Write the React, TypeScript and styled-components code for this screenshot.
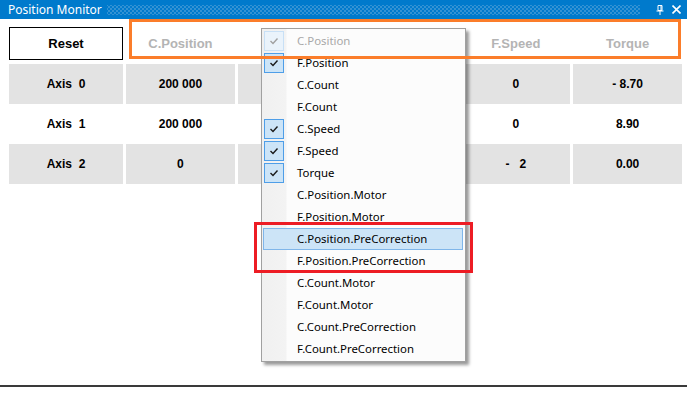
import React from 'react';
import styled, { createGlobalStyle, css } from 'styled-components';

const GlobalStyle = createGlobalStyle`
  html, body { margin: 0; padding: 0; background: #fff; overflow: hidden; }
  * { box-sizing: border-box; }
`;

const Window = styled.div`
  position: relative;
  width: 687px;
  height: 394px;
  display: flex;
  flex-direction: column;
  background: #fff;
  font-family: "Liberation Sans", Arial, sans-serif;
`;

const TitleBar = styled.div`
  height: 19px;
  background: #007acc;
  display: flex;
  align-items: center;
  padding: 0 6px 0 8px;
`;

const Title = styled.span`
  color: #fff;
  font-family: "Noto Sans", "Open Sans", sans-serif;
  font-size: 12px;
  line-height: 19px;
`;

const Grip = styled.div`
  flex: 1;
  height: 10px;
  margin: 0 8px 0 5px;
  background-image:
    radial-gradient(circle, #4f9fd8 0.6px, transparent 0.9px),
    radial-gradient(circle, #4f9fd8 0.6px, transparent 0.9px);
  background-size: 4px 4px, 4px 4px;
  background-position: 0 0, 2px 2px;
`;

const TitleIcon = styled.svg`
  display: block;
  flex: none;
  margin-left: 8px;
`;

const Content = styled.div`
  flex: 1;
  padding: 8px 5px 0 9px;
  display: flex;
  flex-direction: column;
  gap: 4px;
`;

const Row = styled.div<{ $height: number }>`
  display: grid;
  grid-template-columns: 114px repeat(5, 1fr);
  column-gap: 3px;
  height: ${(p) => p.$height}px;
`;

const Rows = styled.div`
  display: flex;
  flex-direction: column;
`;

const ResetButton = styled.button`
  border: 1px solid #000;
  background: #fff;
  font-family: "Liberation Sans", Arial, sans-serif;
  font-weight: bold;
  font-size: 13px;
  color: #000;
  padding: 0;
  margin: 0;
`;

const HeaderLabel = styled.div`
  display: flex;
  align-items: center;
  justify-content: center;
  font-weight: bold;
  font-size: 13px;
  color: #b4b4b4;
`;

const Cell = styled.div<{ $shaded: boolean }>`
  display: flex;
  align-items: center;
  justify-content: center;
  font-weight: bold;
  font-size: 12px;
  color: #000;
  white-space: pre;
  background: ${(p) => (p.$shaded ? '#e3e3e3' : '#fff')};
`;

const BottomLine = styled.div`
  height: 2px;
  background: #3a3a3a;
  margin-bottom: 7px;
`;

const Menu = styled.div`
  position: absolute;
  left: 261px;
  top: 28px;
  width: 205px;
  border: 1px solid #a0a0a0;
  padding: 1px 2px 1px 1px;
  background: linear-gradient(to right, #f0f0f0 0, #f3f3f3 24px, #fcfcfc 25px);
  box-shadow: 3px 3px 3px rgba(0, 0, 0, 0.4);
  font-family: "Noto Sans", "Open Sans", sans-serif;
  font-size: 11.4px;
`;

const MenuItem = styled.div<{ $disabled?: boolean; $active?: boolean }>`
  height: 22px;
  display: flex;
  align-items: center;
  border: 1px solid transparent;
  color: ${(p) => (p.$disabled ? '#a8a8a8' : '#000')};
  ${(p) =>
    p.$active &&
    css`
      background: #cce4f7;
      border-color: #7fb6ea;
    `}
`;

const CheckBox = styled.div<{ $checked: boolean; $disabled?: boolean }>`
  width: 20px;
  height: 20px;
  flex: none;
  display: flex;
  align-items: center;
  justify-content: center;
  border: 1px solid transparent;
  ${(p) =>
    p.$checked &&
    css`
      background: ${p.$disabled ? '#eaf3fb' : '#cce4f7'};
      border-color: ${p.$disabled ? '#c8e0f6' : '#4e9ee8'};
    `}
`;

const ItemLabel = styled.span`
  margin-left: 13px;
  line-height: 20px;
`;

const Annotation = styled.div<{ $color: string }>`
  position: absolute;
  border: 3px solid ${(p) => p.$color};
  pointer-events: none;
`;

const columns = ['C.Position', 'F.Position', 'C.Speed', 'F.Speed', 'Torque'];

// values of F.Position and C.Speed lie under the open menu and are not visible
const rows = [
  { axis: 'Axis  0', values: ['200 000', '', '', '0', '- 8.70'] },
  { axis: 'Axis  1', values: ['200 000', '', '', '0', '8.90'] },
  { axis: 'Axis  2', values: ['0', '', '', '-   2', '0.00'] },
];

const menuItems: { label: string; checked?: boolean; disabled?: boolean; active?: boolean }[] = [
  { label: 'C.Position', checked: true, disabled: true },
  { label: 'F.Position', checked: true },
  { label: 'C.Count' },
  { label: 'F.Count' },
  { label: 'C.Speed', checked: true },
  { label: 'F.Speed', checked: true },
  { label: 'Torque', checked: true },
  { label: 'C.Position.Motor' },
  { label: 'F.Position.Motor' },
  { label: 'C.Position.PreCorrection', active: true },
  { label: 'F.Position.PreCorrection' },
  { label: 'C.Count.Motor' },
  { label: 'F.Count.Motor' },
  { label: 'C.Count.PreCorrection' },
  { label: 'F.Count.PreCorrection' },
];

const Check = ({ color }: { color: string }) => (
  <svg width="10" height="8" viewBox="0 0 10 8">
    <polyline points="1.5,4 4,6.5 8.5,1.5" fill="none" stroke={color} strokeWidth="1.4" />
  </svg>
);

export default function App() {
  return (
    <>
      <GlobalStyle />
      <Window>
        <TitleBar>
          <Title>Position Monitor</Title>
          <Grip />
          <TitleIcon width="8" height="11" viewBox="0 0 8 11">
            <path d="M2 1.5h4v5H2z" fill="none" stroke="#fff" strokeWidth="1" />
            <path d="M5 1.5v5" stroke="#fff" strokeWidth="1" />
            <path d="M0.5 7h7" stroke="#fff" strokeWidth="1" />
            <path d="M4 7v4" stroke="#fff" strokeWidth="1" />
          </TitleIcon>
          <TitleIcon width="9" height="9" viewBox="0 0 9 9">
            <path d="M0.5 0.5l8 8M8.5 0.5l-8 8" stroke="#fff" strokeWidth="1.6" />
          </TitleIcon>
        </TitleBar>
        <Content>
          <Row $height={33}>
            <ResetButton>Reset</ResetButton>
            {columns.map((c) => (
              <HeaderLabel key={c}>{c}</HeaderLabel>
            ))}
          </Row>
          <Rows>
            {rows.map((r, i) => (
              <Row $height={40} key={r.axis}>
                <Cell $shaded={i % 2 === 0}>{r.axis}</Cell>
                {r.values.map((v, j) => (
                  <Cell $shaded={i % 2 === 0} key={j}>
                    {v}
                  </Cell>
                ))}
              </Row>
            ))}
          </Rows>
        </Content>
        <BottomLine />
        <Menu>
          {menuItems.map((m) => (
            <MenuItem key={m.label} $disabled={m.disabled} $active={m.active}>
              <CheckBox $checked={!!m.checked} $disabled={m.disabled}>
                {m.checked && <Check color={m.disabled ? '#a0a0a0' : '#1a1a1a'} />}
              </CheckBox>
              <ItemLabel>{m.label}</ItemLabel>
            </MenuItem>
          ))}
        </Menu>
        <Annotation $color="#fb7d2a" style={{ left: 129, top: 19, width: 552, height: 40 }} />
        <Annotation $color="#ed1c24" style={{ left: 254, top: 222, width: 219, height: 51 }} />
      </Window>
    </>
  );
}
